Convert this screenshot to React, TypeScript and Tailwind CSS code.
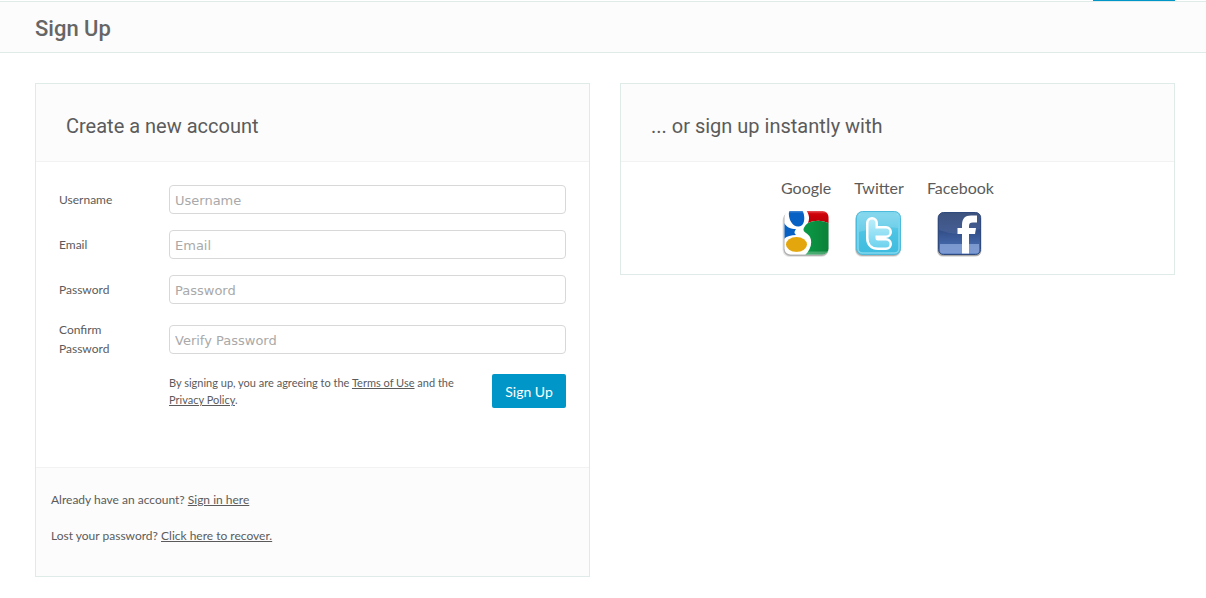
import { type ReactNode } from "react";

function Card({ title, children }: { title: string; children: ReactNode }) {
  return (
    <section className="border border-[#dfebe9] bg-white">
      <header className="border-b border-[#f2f2f2] bg-[#fcfcfc] px-[30px] pt-[27px] pb-[20px]">
        <h2 className="font-['Roboto',sans-serif] text-[20px] leading-[30px] text-[#5b5b5b]">{title}</h2>
      </header>
      {children}
    </section>
  );
}

function Field({ id, label, placeholder, type }: { id: string; label: string; placeholder: string; type: string }) {
  return (
    <div className="flex items-center">
      <label htmlFor={id} className="w-[110px] shrink-0 pr-10 text-[12px] leading-[19px]">
        {label}
      </label>
      <input
        id={id}
        type={type}
        placeholder={placeholder}
        className="h-[29px] min-w-0 flex-1 rounded-[4px] border border-[#d8d8d8] bg-white px-[5px] pt-[2px] font-['DejaVu_Sans',sans-serif] text-[13px] placeholder:text-[#a9a9a9]"
      />
    </div>
  );
}

function GoogleIcon() {
  return (
    <svg viewBox="0 0 48 48" className="size-12" aria-hidden="true">
      <defs>
        <clipPath id="g-clip">
          <rect x="2.5" y="1" width="44" height="43.5" rx="6" />
        </clipPath>
        <linearGradient id="g-red" x1="0" y1="0" x2="0" y2="1">
          <stop offset="0" stopColor="#e0262a" />
          <stop offset="0.35" stopColor="#cc0008" />
          <stop offset="1" stopColor="#b80008" />
        </linearGradient>
        <linearGradient id="g-green" x1="0" y1="0" x2="1" y2="0">
          <stop offset="0" stopColor="#0a9a46" />
          <stop offset="1" stopColor="#0a8038" />
        </linearGradient>
      </defs>
      <rect x="0.5" y="3" width="46" height="44" rx="7" fill="#000" opacity="0.1" />
      <rect x="1.5" y="2" width="45" height="44" rx="6.5" fill="#000" opacity="0.22" />
      <g clipPath="url(#g-clip)">
        <rect width="48" height="48" fill="#fff" />
        <path d="M24 0H48V14C41 10 33 10 26 13C28 8 27 4 24 0Z" fill="url(#g-red)" />
        <path d="M21.5 19C22.5 16 24.5 14 26 13C33 10 41 10 48 14V46H22C28 41 31 33 28 27C26 23 21 22.5 21.5 19Z" fill="url(#g-green)" />
        <path d="M7.5 0H20C23.500 5 23.500 16 16.500 16.500C10 17 5 7 7.5 0Z" fill="#0760c4" />
        <path d="M2 13C5 17.5 8.5 19 14 19C12 22 12 23 14 25C9 25 5 26 2 29Z" fill="#0760c4" />
        <ellipse cx="14.5" cy="34.500" rx="10.5" ry="7.5" fill="#e3a70d" />
        <rect x="2" y="41.5" width="45" height="3" fill="#fff" opacity="0.25" />
        <rect x="2" y="1" width="45" height="1.5" fill="#fff" opacity="0.2" />
      </g>
    </svg>
  );
}

function TwitterIcon() {
  return (
    <svg viewBox="0 0 48 48" className="size-12" aria-hidden="true">
      <defs>
        <linearGradient id="t-bg" x1="0" y1="0" x2="0" y2="1">
          <stop offset="0" stopColor="#74d2ec" />
          <stop offset="0.5" stopColor="#4cc3e3" />
          <stop offset="1" stopColor="#3dbbde" />
        </linearGradient>
        <linearGradient id="t-in" gradientUnits="userSpaceOnUse" x1="0" y1="9" x2="0" y2="38">
          <stop offset="0" stopColor="#bdeefb" />
          <stop offset="1" stopColor="#6cd2ee" />
        </linearGradient>
      </defs>
      <rect x="0" y="3" width="46" height="44" rx="7" fill="#000" opacity="0.1" />
      <rect x="0.5" y="2" width="45" height="44" rx="6.5" fill="#000" opacity="0.22" />
      <rect x="1.5" y="1.5" width="44" height="43" rx="6" fill="url(#t-bg)" stroke="#4dbbdb" />
      <rect x="3" y="3" width="41" height="40" rx="4.5" fill="none" stroke="#84d8ee" strokeWidth="1.5" />
      <path d="M4 4H43V18C31 16 18 18 4 22Z" fill="#fff" opacity="0.16" />
      <path
        d="M17 13V28Q17 34 23 34H31M17 22H31"
        fill="none"
        stroke="#fff"
        strokeWidth="12"
        strokeLinecap="round"
        strokeLinejoin="round"
      />
      <path
        d="M17 13V28Q17 34 23 34H31M17 22H31"
        fill="none"
        stroke="url(#t-in)"
        strokeWidth="7"
        strokeLinecap="round"
        strokeLinejoin="round"
      />
    </svg>
  );
}

function FacebookIcon() {
  return (
    <svg viewBox="0 0 48 48" className="size-12" aria-hidden="true">
      <defs>
        <linearGradient id="f-bg" x1="0" y1="0" x2="0" y2="1">
          <stop offset="0" stopColor="#2d4473" />
          <stop offset="0.45" stopColor="#34508a" />
          <stop offset="1" stopColor="#4d76bd" />
        </linearGradient>
      </defs>
      <rect x="1" y="3" width="44" height="44" rx="6" fill="#000" opacity="0.12" />
      <rect x="1.5" y="2.5" width="44" height="43.5" rx="5.5" fill="#000" opacity="0.25" />
      <rect x="2.5" y="2.5" width="42" height="42" rx="5" fill="url(#f-bg)" stroke="#304a7d" />
      <path d="M3 7Q3 3 7 3H40Q44 3 44 7V19C30 25 16 25 3 20Z" fill="#fff" opacity="0.08" />
      <path d="M4 34H43V41Q43 43.5 40.5 43.5H6.5Q4 43.5 4 41Z" fill="#8aa5d8" opacity="0.8" />
      <path
        d="M26 43.5V24H21.5V18H26V15C26 8.5 29 5.5 35 5.5H41V12.5H37C34 12.5 33 13.5 33 16V18H40L39 24H33V43.5Z"
        fill="#fff"
      />
    </svg>
  );
}

const providers = [
  { name: "Google", icon: <GoogleIcon /> },
  { name: "Twitter", icon: <TwitterIcon /> },
  { name: "Facebook", icon: <FacebookIcon /> },
];

export default function App() {
  return (
    <div className="bg-white font-['Lato',sans-serif] text-[#5b5b5b]">
      <div className="flex justify-end pr-[31px]">
        <div className="h-px w-[82px] bg-[#0096c8]" />
      </div>
      <header className="border-y border-[#dfebe9] bg-[#fcfcfc] pt-[12px] pb-[8px] pl-[35px]">
        <h1 className="font-['Roboto',sans-serif] text-[22px] leading-[30px] font-medium text-[#666]">Sign Up</h1>
      </header>
      <main className="grid grid-cols-2 items-start gap-[30px] pt-[30px] pr-[31px] pb-5 pl-[35px]">
        <Card title="Create a new account">
          <form className="flex flex-col gap-4 px-[23px] pt-[23px] pb-[59px]">
            <Field id="username" label="Username" placeholder="Username" type="text" />
            <Field id="email" label="Email" placeholder="Email" type="email" />
            <Field id="password" label="Password" placeholder="Password" type="password" />
            <Field id="confirm" label="Confirm Password" placeholder="Verify Password" type="password" />
            <div className="flex items-start justify-between pl-[110px]">
              <p className="w-[300px] text-[11px] leading-[17px]">
                By signing up, you are agreeing to the{" "}
                <a href="#terms" className="underline">Terms of Use</a> and the{" "}
                <a href="#privacy" className="underline">Privacy Policy</a>.
              </p>
              <button type="button" className="h-[34px] w-[74px] rounded-[2px] bg-[#0096c8] text-[14px] text-white">
                Sign Up
              </button>
            </div>
          </form>
          <footer className="flex flex-col gap-4 border-t border-[#f2f2f2] bg-[#fcfcfc] px-[15px] pt-[22px] pb-[30px] text-[12px] leading-5">
            <p>
              Already have an account? <a href="#signin" className="underline">Sign in here</a>
            </p>
            <p>
              Lost your password? <a href="#recover" className="underline">Click here to recover.</a>
            </p>
          </footer>
        </Card>
        <Card title="... or sign up instantly with">
          <div className="flex justify-center gap-[23px] pt-[14px] pr-[20px] pb-[16px]">
            {providers.map((p) => (
              <a key={p.name} href={"#" + p.name.toLowerCase()} className="flex flex-col items-center gap-[10px]">
                <span className="text-[16px] leading-6">{p.name}</span>
                {p.icon}
              </a>
            ))}
          </div>
        </Card>
      </main>
    </div>
  );
}
